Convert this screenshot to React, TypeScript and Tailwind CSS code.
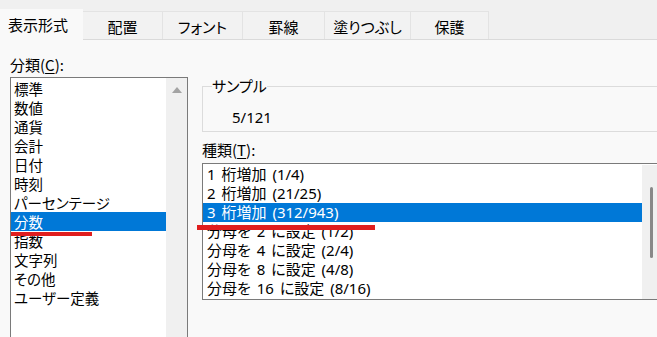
import React from "react";

const FONT = '"Noto Sans CJK JP", "Noto Sans", sans-serif';

const tabs: { label: string; w: string }[] = [
  { label: "配置", w: "w-[80px]" },
  { label: "フォント", w: "w-[80px]" },
  { label: "罫線", w: "w-[82px]" },
  { label: "塗りつぶし", w: "w-[86px]" },
  { label: "保護", w: "w-[78px]" },
];

const categories = [
  "標準",
  "数値",
  "通貨",
  "会計",
  "日付",
  "時刻",
  "パーセンテージ",
  "分数",
  "指数",
  "文字列",
  "その他",
  "ユーザー定義",
];

const types = [
  "1 桁増加 (1/4)",
  "2 桁増加 (21/25)",
  "3 桁増加 (312/943)",
  "分母を 2 に設定 (1/2)",
  "分母を 4 に設定 (2/4)",
  "分母を 8 に設定 (4/8)",
  "分母を 16 に設定 (8/16)",
];

export default function App() {
  return (
    <div
      className="relative w-[657px] h-[337px] overflow-hidden bg-[#f9f9f9] text-black [font-feature-settings:'palt']"
      style={{ fontFamily: FONT }}
    >
      {/* Tab strip */}
      <div className="flex items-end h-[40px] bg-[#f0f0f0] border-b border-[#dadada]">
        <div className="relative z-10 mb-[-1px] w-[83px] h-[31px] bg-[#f9f9f9] flex items-center pl-[8px] pt-[1px] text-[15px] leading-[20px]">
          表示形式
        </div>
        {tabs.map((t) => (
          <div
            key={t.label}
            className={`${t.w} h-[28px] bg-[#f2f2f2] border-t border-r border-[#e3e3e3] flex items-center justify-center text-[15px] leading-[20px] pt-[3px]`}
          >
            {t.label}
          </div>
        ))}
      </div>

      {/* Content */}
      <div className="flex">
        {/* Left column */}
        <div className="pl-[10px] w-[202px] shrink-0">
          <div className="mt-[15px] text-[15px] leading-[20px]">
            分類(<span className="underline underline-offset-2">C</span>):
          </div>
          <div className="mt-[2px] w-[178px] h-[280px] border border-[#7a7a7a] bg-white flex">
            <div className="flex-1 pt-[1px]">
              {categories.map((c) => (
                <div
                  key={c}
                  className={`h-[19px] leading-[19px] pl-[3px] text-[14.5px] whitespace-nowrap ${
                    c === "分数" ? "bg-[#0078d7] text-white" : ""
                  }`}
                >
                  {c}
                </div>
              ))}
            </div>
            <div className="w-[21px] bg-[#f0f0f0] flex justify-center pt-[9px]">
              <svg width="10" height="6" viewBox="0 0 10 6">
                <path d="M5 0 L10 6 L0 6 Z" fill="#a3a3a3" />
              </svg>
            </div>
          </div>
        </div>

        {/* Right column */}
        <div className="w-[460px] shrink-0">
          <fieldset className="mt-[37px] border border-[#dcdcdc] px-[9px] m-0">
            <legend className="px-0 text-[15px] leading-[18px]">サンプル</legend>
            <div
              className="h-[36px] pt-[12px] pl-[20px] text-[15px] leading-[20px]"
              style={{ fontFamily: '"Noto Sans", "Noto Sans CJK JP", sans-serif' }}
            >
              5/121
            </div>
          </fieldset>
          <div className="mt-[8px] text-[15px] leading-[20px]">
            種類(<span className="underline underline-offset-2">T</span>):
          </div>
          <div className="mt-[3px] h-[137px] border border-[#7a7a7a] bg-white flex">
            <div
              className="w-[439px] pt-[1px]"
              style={{ fontFamily: '"Noto Sans", "Noto Sans CJK JP", sans-serif' }}
            >
              {types.map((t, i) => (
                <div
                  key={t}
                  className={`h-[19px] leading-[19px] pl-[4px] text-[15px] whitespace-nowrap [word-spacing:2px] ${
                    i === 2 ? "bg-[#0078d7] text-white" : ""
                  }`}
                >
                  {t}
                </div>
              ))}
            </div>
            <div className="flex-1 bg-[#f0f0f0] mt-[1px] flex justify-center pt-[22px]">
              <div className="w-[3px] h-[71px] rounded-full bg-[#888888]" />
            </div>
          </div>
        </div>
      </div>

      {/* Red annotation underlines */}
      <div className="absolute left-[11px] top-[232px] w-[81px] h-[4px] bg-[#e01e1e]" />
      <div className="absolute left-[197px] top-[225px] w-[178px] h-[5px] bg-[#e01e1e]" />
    </div>
  );
}
